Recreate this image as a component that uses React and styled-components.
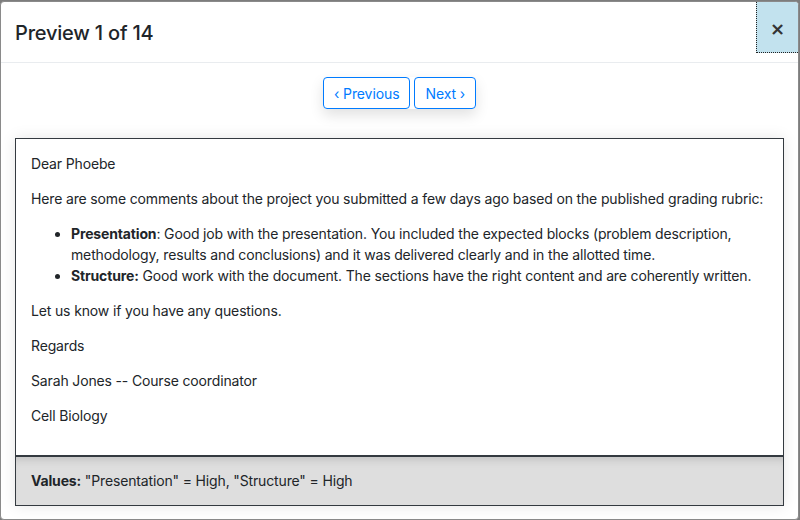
import React from "react";
import styled, { createGlobalStyle } from "styled-components";

const GlobalStyle = createGlobalStyle`
  html, body {
    margin: 0;
    padding: 0;
    background: #7d7d7d;
  }
  body {
    font-family: Inter, "Noto Sans", "Liberation Sans", sans-serif;
    color: #212529;
  }
  * {
    box-sizing: border-box;
  }
`;

const Modal = styled.div`
  margin: 1px 1px 0 0;
  height: 519px;
  background: #fff;
  border: 1px solid #8a8a8a;
  border-radius: 4px;
  display: flex;
  flex-direction: column;
  overflow: hidden;
`;

const Header = styled.div`
  display: flex;
  align-items: flex-start;
  justify-content: space-between;
  border-bottom: 1px solid #e9ecef;
  height: 61px;
`;

const Title = styled.h5`
  margin: 0;
  padding: 16px 14px;
  font-size: 20px;
  font-weight: 500;
  line-height: 30px;
  letter-spacing: -0.2px;
`;

const CloseButton = styled.button`
  width: 42px;
  height: 51px;
  background: #c2e2ee;
  border: 1px dotted #222;
  border-top: none;
  border-right: none;
  padding: 2px 0 0 0;
  display: flex;
  align-items: center;
  justify-content: center;
  font-family: "DejaVu Sans", sans-serif;
  font-size: 18px;
  font-weight: 700;
  color: #333;
  cursor: pointer;
`;

const Body = styled.div`
  flex: 1;
  padding: 14px 14px 0 14px;
  display: flex;
  flex-direction: column;
  align-items: center;
`;

const Nav = styled.div`
  display: flex;
  gap: 4px;
  box-shadow: 0 6px 14px rgba(0, 0, 0, 0.12);
  border-radius: 4px;
  margin-bottom: 29px;
`;

const NavButton = styled.button`
  height: 32px;
  padding: 0 10px;
  background: #fff;
  border: 1px solid #007bff;
  border-radius: 4px;
  color: #007bff;
  font-family: Inter, "Noto Sans", sans-serif;
  font-size: 14px;
  letter-spacing: -0.1px;
  cursor: pointer;
`;

const Card = styled.div`
  align-self: stretch;
  border: 1px solid #343a40;
  box-shadow: 0 0 14px rgba(0, 0, 0, 0.1);
  font-size: 14px;
  line-height: 21px;
  letter-spacing: -0.15px;
`;

const Content = styled.div`
  padding: 14px 15px 0 15px;
  height: 316px;

  p {
    margin: 0 0 14px 0;
  }
  ul {
    margin: 0 0 14px 0;
    padding-left: 40px;
  }
  strong {
    font-weight: 700;
  }
`;

const Footer = styled.div`
  border-top: 2px solid #343a40;
  background: #dedede;
  box-shadow: inset 0 8px 10px -6px rgba(0, 0, 0, 0.15);
  padding: 13px 15px 14px 15px;

  strong {
    font-weight: 700;
  }
`;

export default function App() {
  return (
    <>
      <GlobalStyle />
      <Modal>
        <Header>
          <Title>Preview 1 of 14</Title>
          <CloseButton aria-label="Close">×</CloseButton>
        </Header>
        <Body>
          <Nav>
            <NavButton>‹ Previous</NavButton>
            <NavButton>Next ›</NavButton>
          </Nav>
          <Card>
            <Content>
              <p>Dear Phoebe</p>
              <p>
                Here are some comments about the project you submitted a few
                days ago based on the published grading rubric:
              </p>
              <ul>
                <li>
                  <strong>Presentation</strong>: Good job with the
                  presentation. You included the expected blocks (problem
                  description, methodology, results and conclusions) and it was
                  delivered clearly and in the allotted time.
                </li>
                <li>
                  <strong>Structure:</strong> Good work with the document. The
                  sections have the right content and are coherently written.
                </li>
              </ul>
              <p>Let us know if you have any questions.</p>
              <p>Regards</p>
              <p>Sarah Jones -- Course coordinator</p>
              <p>Cell Biology</p>
            </Content>
            <Footer>
              <strong>Values:</strong> "Presentation" = High, "Structure" =
              High
            </Footer>
          </Card>
        </Body>
      </Modal>
    </>
  );
}
